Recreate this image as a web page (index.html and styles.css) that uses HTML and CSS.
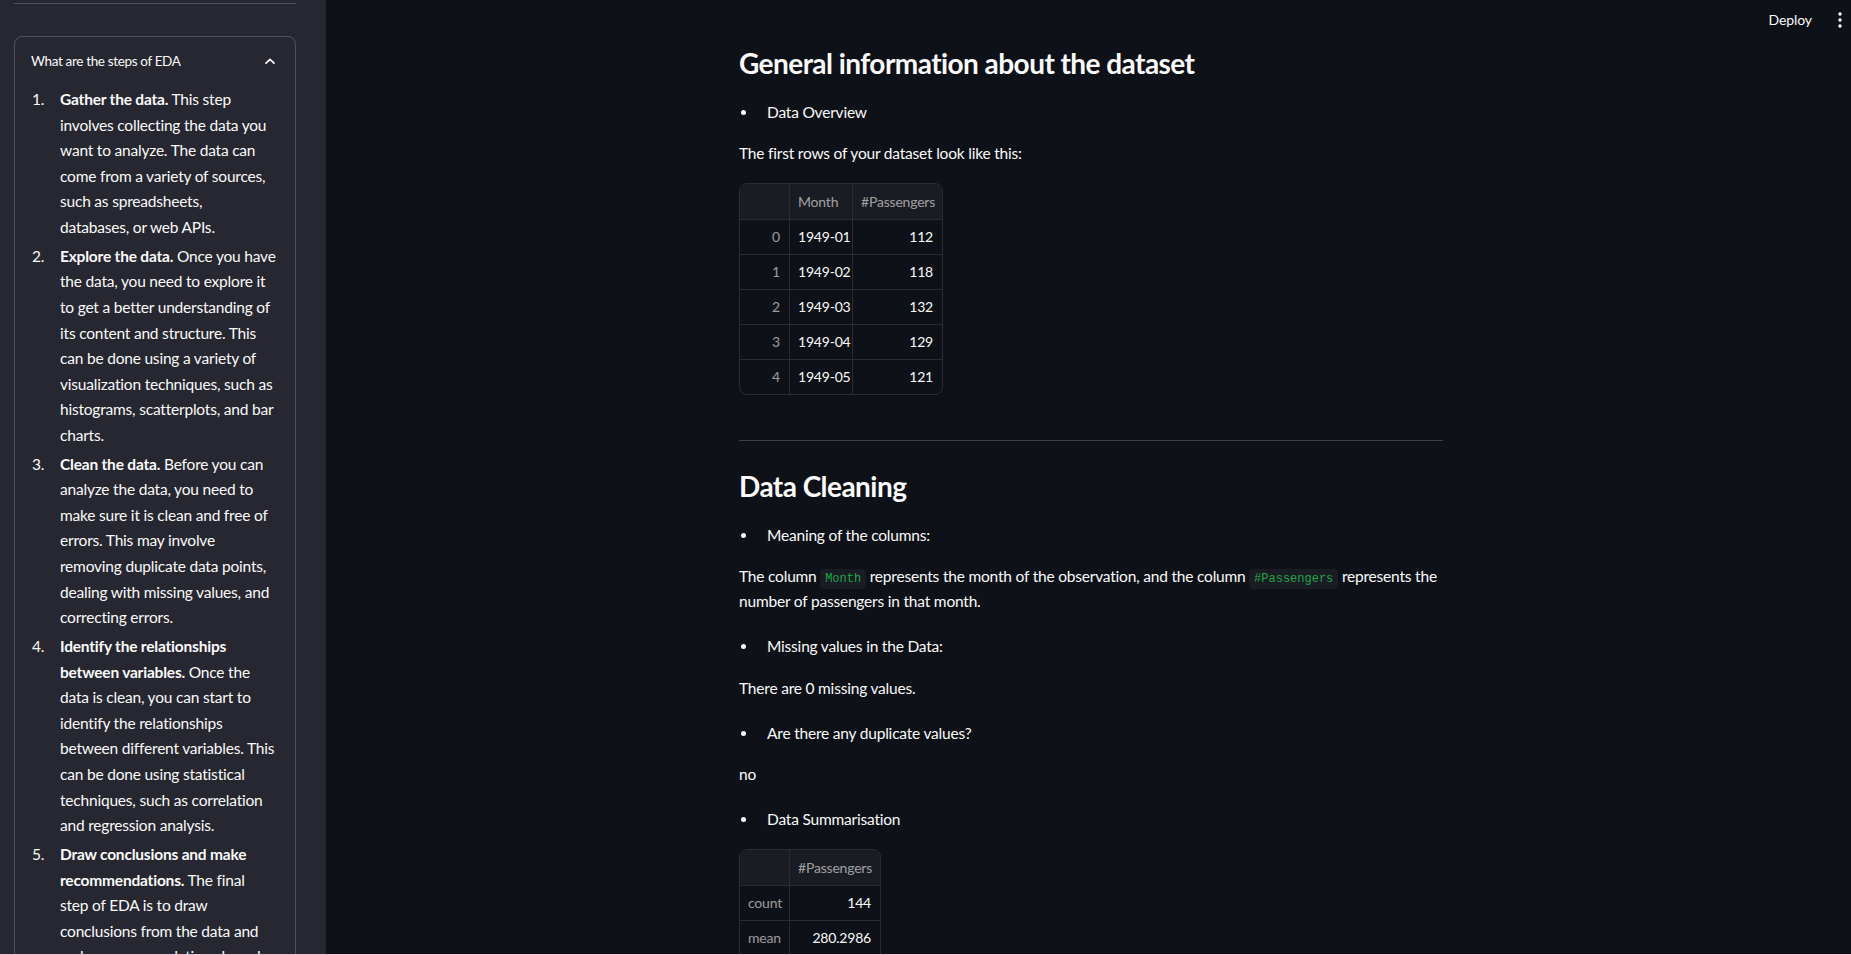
FILE: index.html
```html
<!DOCTYPE html>
<html lang="en">
<head>
<meta charset="utf-8">
<title>EDA</title>
<link rel="stylesheet" href="styles.css">
</head>
<body>
<div class="app">
  <aside class="sidebar">
    <div class="sb-inner">
      <hr class="sb-rule">
      <div class="expander">
        <div class="exp-summary">
          <span>What are the steps of EDA</span>
          <svg class="chev" width="10" height="6" viewBox="0 0 10 6"><path d="M1 5.2 L5 1.3 L9 5.2" fill="none" stroke="#fafafa" stroke-width="1.7" stroke-linecap="round" stroke-linejoin="round"/></svg>
        </div>
        <div class="exp-body">
          <ol class="steps">
            <li><strong>Gather the data.</strong> This step involves collecting the data you want to analyze. The data can come from a variety of sources, such as spreadsheets,<br>databases, or web APIs.</li>
            <li><strong>Explore the data.</strong> Once you have the data, you need to explore it to get a better understanding of its content and structure. This can be done using a variety of visualization techniques, such as histograms, scatterplots, and bar charts.</li>
            <li><strong>Clean the data.</strong> Before you can analyze the data, you need to make sure it is clean and free of errors. This may involve removing duplicate data points, dealing with missing values, and correcting errors.</li>
            <li><strong>Identify the relationships between variables.</strong> Once the data is clean, you can start to identify the relationships between different variables. This can be done using statistical techniques, such as correlation and regression analysis.</li>
            <li><strong>Draw conclusions and make recommendations.</strong> The final<br>step of EDA is to draw conclusions from the data and make recommendations based on your findings.</li>
          </ol>
        </div>
      </div>
    </div>
  </aside>

  <main class="main">
    <div class="toolbar">
      <span class="deploy">Deploy</span>
      <svg class="kebab" width="4" height="16" viewBox="0 0 4 16"><circle cx="2" cy="2" r="1.7" fill="#fafafa"/><circle cx="2" cy="8" r="1.7" fill="#fafafa"/><circle cx="2" cy="14" r="1.7" fill="#fafafa"/></svg>
    </div>

    <div class="content">
      <h2 class="section-title">General information about the dataset</h2>
      <ul class="bullet"><li>Data Overview</li></ul>
      <p class="text">The first rows of your dataset look like this:</p>
      <table class="df df-head">
        <colgroup><col class="c-idx"><col class="c-month"><col class="c-pass"></colgroup>
        <thead><tr><th></th><th class="left">Month</th><th>#Passengers</th></tr></thead>
        <tbody>
          <tr><td class="idx">0</td><td class="left">1949-01</td><td>112</td></tr>
          <tr><td class="idx">1</td><td class="left">1949-02</td><td>118</td></tr>
          <tr><td class="idx">2</td><td class="left">1949-03</td><td>132</td></tr>
          <tr><td class="idx">3</td><td class="left">1949-04</td><td>129</td></tr>
          <tr><td class="idx">4</td><td class="left">1949-05</td><td>121</td></tr>
        </tbody>
      </table>

      <hr class="divider">

      <h2 class="section-title after-rule">Data Cleaning</h2>
      <ul class="bullet"><li>Meaning of the columns:</li></ul>
      <p class="text">The column <code>Month</code> represents the month of the observation, and the column <code>#Passengers</code> represents the number of passengers in that month.</p>
      <ul class="bullet"><li>Missing values in the Data:</li></ul>
      <p class="text">There are 0 missing values.</p>
      <ul class="bullet"><li>Are there any duplicate values?</li></ul>
      <p class="text">no</p>
      <ul class="bullet"><li>Data Summarisation</li></ul>
      <table class="df df-summary">
        <colgroup><col class="c-idx"><col class="c-pass2"></colgroup>
        <thead><tr><th></th><th>#Passengers</th></tr></thead>
        <tbody>
          <tr><td class="idx">count</td><td>144</td></tr>
          <tr><td class="idx">mean</td><td>280.2986</td></tr>
          <tr><td class="idx">std</td><td>119.9663</td></tr>
          <tr><td class="idx">min</td><td>104</td></tr>
        </tbody>
      </table>
    </div>
  </main>
</div>
<div class="bottom-line"></div>
</body>
</html>
```

FILE: styles.css
```css
html, body {
  margin: 0;
  padding: 0;
  height: 955px;
  overflow: hidden;
}

body {
  background: #0e1117;
  color: #fafafa;
  font-family: Lato, "Noto Sans", sans-serif;
  font-size: 15.5px;
  letter-spacing: -0.2px;
}

.app {
  display: flex;
  height: 955px;
  overflow: hidden;
}

/* ---------- sidebar ---------- */
.sidebar {
  width: 326px;
  flex: none;
  background: #262730;
  overflow: hidden;
}

.sb-inner {
  padding: 3px 30px 0 14px;
}

.sb-rule {
  border: 0;
  border-top: 1px solid rgba(250, 250, 250, 0.2);
  margin: 0 0 32px;
}

.expander {
  border: 1px solid rgba(250, 250, 250, 0.2);
  border-radius: 8px;
}

.exp-summary {
  display: flex;
  align-items: center;
  justify-content: space-between;
  padding: 14px 20px 12px 16px;
  font-size: 13.5px;
  letter-spacing: -0.35px;
  line-height: 20px;
}

.chev {
  display: block;
}

.exp-body {
  padding: 0 16px 16px;
}

.steps {
  margin: 0;
  padding-left: 17px;
  line-height: 25.6px;
}

.steps li {
  margin: 3.2px 0;
  padding-left: 12px;
}

.steps li:first-child {
  margin-top: 4px;
}

.steps strong {
  font-weight: 700;
}

/* ---------- main ---------- */
.main {
  flex: 1;
  position: relative;
  overflow: hidden;
  padding-left: 5px;
}

.toolbar {
  position: absolute;
  top: 12px;
  right: 9px;
  display: flex;
  align-items: center;
  gap: 26px;
  height: 16px;
}

.deploy {
  font-size: 14px;
  letter-spacing: -0.1px;
  line-height: 16px;
}

.kebab {
  display: block;
}

.content {
  max-width: 704px;
  margin: 0 auto;
  padding: 46px 16px 0;
}

.section-title {
  margin: 0;
  font-size: 28px;
  line-height: 34px;
  font-weight: 700;
  letter-spacing: -0.55px;
}

.section-title.after-rule {
  margin-top: 28px;
}

.bullet {
  margin: 19.5px 0 0;
  padding-left: 19px;
  line-height: 25.6px;
}

.bullet li {
  padding-left: 9px;
}

.text {
  margin: 15.5px 0 0;
  line-height: 25.6px;
}

code {
  font-family: "Liberation Mono", "DejaVu Sans Mono", monospace;
  font-size: 12px;
  line-height: 1;
  letter-spacing: 0;
  color: #21a546;
  background: #1a1c24;
  border-radius: 4px;
  padding: 3px 4.8px;
}

.divider {
  border: 0;
  border-top: 1px solid rgba(250, 250, 250, 0.2);
  margin: 45px 0 0;
}

/* ---------- dataframes ---------- */
.df {
  margin-top: 17px;
  border-collapse: separate;
  border-spacing: 0;
  table-layout: fixed;
  border: 1px solid #2a2c33;
  border-radius: 8px;
  overflow: hidden;
  font-size: 14px;
  letter-spacing: -0.2px;
}

.df-head { width: 204px; }
.df-summary { width: 142px; }

.c-idx { width: 50px; }
.c-month { width: 63px; }
.c-pass { width: 89px; }
.c-pass2 { width: 90px; }

.df th,
.df td {
  padding: 7px 9px 7px 8px;
  text-align: right;
  white-space: nowrap;
  border-right: 1px solid #2a2c33;
  border-bottom: 1px solid #2a2c33;
}

.df th {
  background: #1a1c23;
  color: rgba(250, 250, 250, 0.6);
  font-weight: 400;
  line-height: 21px;
}

.df td {
  line-height: 20px;
  color: #fafafa;
}

.df th:last-child,
.df td:last-child {
  border-right: 0;
}

.df tbody tr:last-child td {
  border-bottom: 0;
}

.df .left {
  text-align: left;
}

.df td.idx {
  color: rgba(250, 250, 250, 0.6);
}

.bottom-line {
  position: fixed;
  left: 0;
  right: 0;
  bottom: 0;
  height: 1px;
  background: #f2c4d2;
}
```
